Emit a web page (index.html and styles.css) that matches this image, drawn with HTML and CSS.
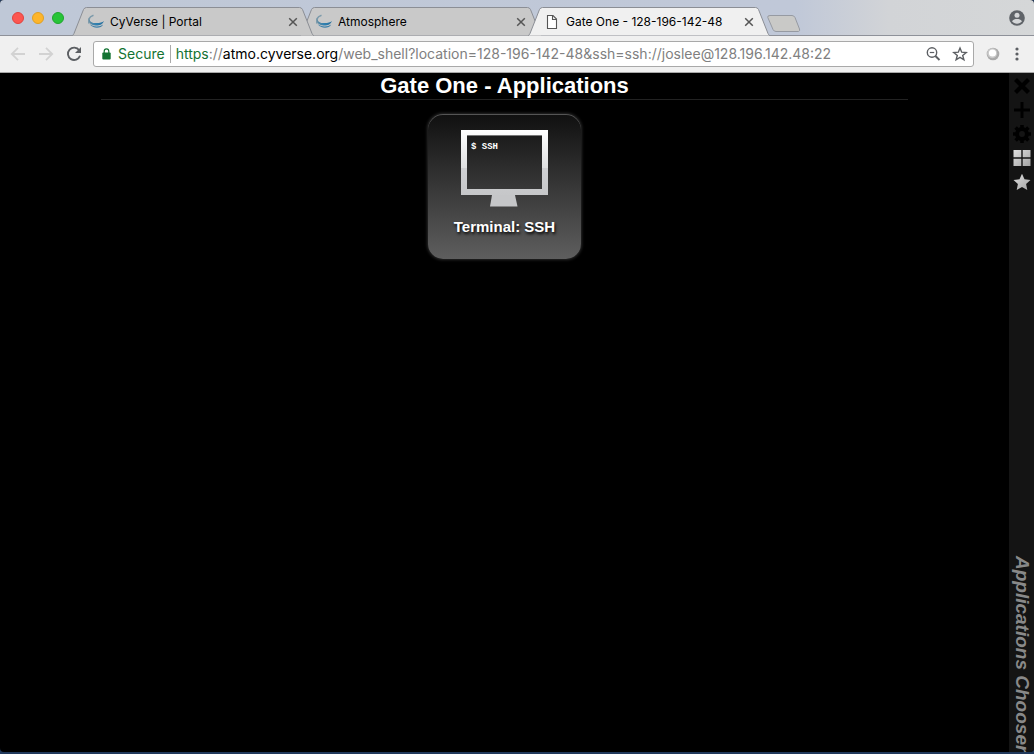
FILE: index.html
```html
<!DOCTYPE html>
<html lang="en">
<head>
<meta charset="utf-8">
<title>Gate One - 128-196-142-48</title>
<link rel="stylesheet" href="styles.css">
</head>
<body>
<svg class="defs" aria-hidden="true">
  <defs>
    <linearGradient id="swoosh-ink" x1="0" x2="1" y1="0" y2="0">
      <stop offset="0" stop-color="#5f8aa2"/><stop offset=".5" stop-color="#2f80b0"/><stop offset="1" stop-color="#2a6f9c"/>
    </linearGradient>
    <linearGradient id="silver" x1="0" x2="1" y1="0" y2="1">
      <stop offset="0" stop-color="#e0e0e0"/><stop offset="1" stop-color="#a2a2a2"/>
    </linearGradient>
    <symbol id="tab-shape" viewBox="0 0 242 29" preserveAspectRatio="none">
      <path d="M0 28.500C1 28.500 1.500 27.500 2 26.500L11.500 2.500Q12.500.5 14.500.5H227.500Q229.500.5 230.500 2.500L240 26.500C240.500 27.500 241 28.500 242 28.500"/>
    </symbol>
    <symbol id="swoosh" viewBox="0 0 16 16">
      <path d="M5.500 1.300C.8 3-.6 6.500 1.400 9.500" fill="none" stroke="#7d9bab" stroke-width="1.600"/>
      <path d="M1.600 4C1.200 7.500 4 9 7.800 9.100S14 8.600 15.900 7C15 10.200 11.500 11.700 7.500 11.500C2.500 11.200-.3 8.200 1.600 4Z" fill="url(#swoosh-ink)"/>
      <path d="M1.600 10C5 13 11.500 13.200 15.200 10.500C13 14.800 5 15 1.600 10Z" fill="#3d7fa8"/>
    </symbol>
    <symbol id="cross" viewBox="0 0 10 10"><path d="M1.200 1.200l7.600 7.600M8.800 1.200l-7.600 7.600" stroke="#555" stroke-width="1.500"/></symbol>
  </defs>
</svg>
<div class="window">
  <header class="tab-strip">
    <div class="lights">
      <button class="light red" aria-label="Close window"></button>
      <button class="light amber" aria-label="Minimize window"></button>
      <button class="light green" aria-label="Zoom window"></button>
    </div>
    <nav class="tabs" aria-label="Tabs">
      <div class="tab first">
        <svg class="tab-bg" aria-hidden="true"><use href="#tab-shape"/></svg>
        <svg class="favicon" aria-hidden="true"><use href="#swoosh"/></svg>
        <a class="tab-title" href="#">CyVerse | Portal</a>
        <button class="tab-close" aria-label="Close tab"><svg><use href="#cross"/></svg></button>
      </div>
      <div class="tab second">
        <svg class="tab-bg" aria-hidden="true"><use href="#tab-shape"/></svg>
        <svg class="favicon" aria-hidden="true"><use href="#swoosh"/></svg>
        <a class="tab-title" href="#">Atmosphere</a>
        <button class="tab-close" aria-label="Close tab"><svg><use href="#cross"/></svg></button>
      </div>
      <div class="tab active">
        <svg class="tab-bg" aria-hidden="true"><use href="#tab-shape"/></svg>
        <svg class="favicon" viewBox="0 0 16 16" aria-hidden="true"><path d="M3.500 1.500H9L12.500 5V14.500H3.500ZM8.500 1.500V5.500H12.500" fill="#fff" stroke="#555" stroke-width="1.100"/></svg>
        <a class="tab-title" href="#" aria-current="page">Gate One - 128-196-142-48</a>
        <button class="tab-close" aria-label="Close tab"><svg><use href="#cross"/></svg></button>
      </div>
    </nav>
    <button class="new-tab" aria-label="New tab"><svg viewBox="0 0 34 17"><path d="M3 .5H25Q27 .5 28 2.500L32.500 14Q33.200 16 31.500 16.500H9Q7 16.500 6 14.500L.8 2.500Q.2 .5 3 .5Z" fill="#c9c9c7" stroke="#969aa2"/></svg></button>
    <button class="profile" aria-label="Profile"><svg viewBox="0 0 16 16"><circle cx="8" cy="8" r="7.800" fill="#5f6368"/><circle cx="8" cy="5.300" r="2.500" fill="#d4d6d8"/><path d="M3 11.300C4 9.300 6 8.900 8 8.900S12 9.300 13 11.300C10.800 14.500 5.200 14.500 3 11.300Z" fill="#d4d6d8"/></svg></button>
  </header>

  <div class="toolbar">
    <button class="tool" aria-label="Back"><svg viewBox="0 0 16 16"><path d="M15 8H2M8 1.800L1.800 8L8 14.200" fill="none" stroke="#d2d2d2" stroke-width="1.800"/></svg></button>
    <button class="tool" aria-label="Forward"><svg viewBox="0 0 16 16"><path d="M1 8H14M8 1.800L14.200 8L8 14.200" fill="none" stroke="#d2d2d2" stroke-width="1.800"/></svg></button>
    <button class="tool" aria-label="Reload"><svg viewBox="0 0 16 16"><path d="M13.200 4.200A6.200 6.200 0 1 0 14 9.800" fill="none" stroke="#5c5f63" stroke-width="1.900"/><path d="M15 1V7H9Z" fill="#5c5f63"/></svg></button>
    <div class="omnibox">
      <svg class="lock" viewBox="0 0 9 12" aria-hidden="true"><rect x=".3" y="4.500" width="8.400" height="7" rx="1" fill="#137333"/><path d="M2.200 5V3.200A2.300 2.300 0 0 1 6.800 3.200V5" fill="none" stroke="#137333" stroke-width="1.200"/></svg>
      <span class="secure">Secure</span>
      <div class="url" role="textbox" contenteditable="true" spellcheck="false" aria-label="Address"><span class="scheme">https</span>://<span class="host">atmo.cyverse.org</span>/web_shell?location=128-196-142-48&amp;ssh=ssh://joslee@128.196.142.48:22</div>
      <button class="omni-btn" aria-label="Zoom out"><svg viewBox="0 0 16 16"><circle cx="7" cy="6.500" r="4.700" fill="none" stroke="#5c5f63" stroke-width="1.400"/><path d="M4.800 6.500H9.200" stroke="#5c5f63" stroke-width="1.200"/><path d="M10.400 10L14.500 14" stroke="#5c5f63" stroke-width="1.900"/></svg></button>
      <button class="omni-btn" aria-label="Bookmark"><svg viewBox="0 0 16 16"><path d="M8 2L9.700 6.200L14.200 6.500L10.700 9.400L11.900 13.800L8 11.400L4.100 13.800L5.300 9.400L1.800 6.500L6.300 6.200Z" fill="none" stroke="#5c5f63" stroke-width="1.400"/></svg></button>
    </div>
    <button class="ext" aria-label="Extension"><svg viewBox="0 0 14 14"><circle cx="7" cy="7" r="6.300" fill="#a9a9a9"/><circle cx="6.200" cy="6.200" r="5" fill="#c9c9c9"/><circle cx="6.500" cy="6" r="3.600" fill="#fff"/></svg></button>
    <button class="menu" aria-label="Menu"><svg viewBox="0 0 4 14"><circle cx="2" cy="2" r="1.600"/><circle cx="2" cy="7" r="1.600"/><circle cx="2" cy="12" r="1.600"/></svg></button>
  </div>

  <div class="page">
    <main class="content">
      <h1 class="title">Gate One - Applications</h1>
      <button class="app">
        <svg class="monitor" viewBox="0 0 87 77" aria-hidden="true">
          <defs><linearGradient id="frame" x1="0" x2="0" y1="0" y2="1"><stop offset="0" stop-color="#fff"/><stop offset=".58" stop-color="#dfe0e1"/><stop offset=".59" stop-color="#cfd0d2"/><stop offset="1" stop-color="#c6c7c9"/></linearGradient></defs>
          <path d="M0 0H87V65H0ZM6 5V59H81V5Z" fill="url(#frame)" fill-rule="evenodd"/>
          <path d="M6 5.500H81" stroke="#777"/>
          <path d="M31 65H54L56.500 76.500H29Z" fill="#c5c6c8"/>
          <text class="prompt" x="10" y="19">$ SSH</text>
        </svg>
        <span class="app-name">Terminal: SSH</span>
      </button>
    </main>
    <aside class="sidebar">
      <button class="side-btn" aria-label="Close"><svg viewBox="0 0 18 18"><path d="M2.500 2.500L15.500 15.500M15.500 2.500L2.500 15.500" stroke="#000" stroke-width="4.200"/></svg></button>
      <button class="side-btn" aria-label="New"><svg viewBox="0 0 18 18"><path d="M9 1V17M1 9H17" stroke="#000" stroke-width="3"/></svg></button>
      <button class="side-btn" aria-label="Settings"><svg viewBox="0 0 18 18"><circle cx="9" cy="9" r="4.900" fill="none" stroke="#000" stroke-width="4"/><path d="M9 0V3M9 15V18M0 9H3M15 9H18M2.600 2.600L4.800 4.800M13.200 13.200L15.400 15.400M15.400 2.600L13.200 4.800M4.800 13.200L2.600 15.400" stroke="#000" stroke-width="3.600"/></svg></button>
      <button class="side-btn" aria-label="Grid"><svg viewBox="0 0 18 18"><path d="M.5 1H8.300V8.300H.5ZM9.700 1H17.500V8.300H9.700ZM.5 9.700H8.300V17H.5ZM9.700 9.700H17.500V17H9.700Z" fill="url(#silver)"/></svg></button>
      <button class="side-btn" aria-label="Applications"><svg viewBox="0 0 18 18"><path d="M9 .8L11.500 6.300L17.500 7L13.100 11.100L14.300 17L9 14L3.700 17L4.900 11.100L.5 7L6.500 6.300Z" fill="url(#silver)"/></svg></button>
      <div class="side-label">Applications Chooser</div>
    </aside>
  </div>
</div>
</body>
</html>
```

FILE: styles.css
```css
* { box-sizing: border-box; }
html, body { height: 100%; }
body {
  margin: 0;
  background: #21395c;
  font-family: Inter, "Noto Sans", sans-serif;
}
button {
  padding: 0;
  border: 0;
  background: none;
  font: inherit;
  color: inherit;
}
svg { display: block; }
.defs { position: absolute; width: 0; height: 0; }

.window {
  display: flex;
  flex-direction: column;
  height: calc(100vh - 2px);
  overflow: hidden;
  border-radius: 4px;
  background: #000;
}

/* Tab strip */
.tab-strip {
  display: flex;
  align-items: flex-end;
  flex: none;
  height: 36px;
  padding: 0 9px 0 12px;
  background: linear-gradient(90deg, #bfc8d7 0, #c0c8d8 77%, #d2d4d7 86%, #d5d7d8 100%);
  box-shadow: inset 0 -1px #8e9199;
}
.lights {
  display: flex;
  gap: 8px;
  width: 60px;
  height: 24px;
}
.light {
  width: 12px;
  height: 12px;
  border-radius: 50%;
}
.red { background: #fc5650; border: 1px solid #e0433e; }
.amber { background: #fdb52a; border: 1px solid #dfa023; }
.green { background: #27c438; border: 1px solid #1fa52d; }
.tabs { display: flex; flex: 0 1 698px; min-width: 0; }
.tab {
  position: relative;
  display: flex;
  align-items: center;
  flex: 0 1 242px;
  min-width: 0;
  height: 29px;
  padding: 0 16px;
}
.tab + .tab { margin-left: -14px; }
.first { z-index: 2; }
.second { z-index: 1; }
.active { z-index: 3; }
.tab-bg {
  position: absolute;
  inset: 0;
  width: 100%;
  height: 100%;
  fill: #c9c9c9;
  stroke: #8b8e95;
}
.active .tab-bg { fill: #f0f0f0; }
.favicon { position: relative; flex: none; width: 16px; height: 16px; }
.tab-title {
  position: relative;
  flex: 1;
  margin-left: 6px;
  overflow: hidden;
  white-space: nowrap;
  font-size: 12px;
  line-height: 16px;
  color: #000;
  text-decoration: none;
}
.tab-close { position: relative; flex: none; }
.tab-close svg { width: 10px; height: 10px; }
.new-tab { flex: none; margin: 0 auto 4px -3px; }
.new-tab svg { width: 34px; height: 17px; }
.profile { flex: none; margin-bottom: 10px; }
.profile svg { width: 16px; height: 16px; }

/* Toolbar */
.toolbar {
  display: flex;
  align-items: center;
  flex: none;
  height: 37px;
  padding: 0 15px 0 10px;
  border-bottom: 1px solid #a8a8a8;
  background: #f0f0f0;
}
.tool { flex: none; margin-right: 12px; }
.tool svg { width: 16px; height: 16px; }
.tool:nth-child(3) { margin-right: 11px; }
.omnibox {
  display: flex;
  align-items: center;
  flex: 1;
  min-width: 0;
  height: 26px;
  padding: 0 5px 0 8px;
  border: 1px solid #a9a9a9;
  border-radius: 3px;
  background: #fff;
  font-size: 14px;
  line-height: 18px;
}
.lock { flex: none; width: 9px; height: 12px; margin-right: 7px; }
.secure {
  margin-right: 5px;
  padding-right: 5px;
  border-right: 1px solid #aaa;
  color: #137333;
}
.url {
  flex: 1;
  min-width: 0;
  overflow: hidden;
  white-space: nowrap;
  color: #808080;
}
.scheme { color: #137333; }
.host { color: #000; }
.omni-btn { flex: none; margin-left: 11px; }
.omni-btn svg { width: 16px; height: 16px; }
.ext { flex: none; margin-left: 12px; }
.ext svg { width: 14px; height: 14px; }
.menu { flex: none; margin-left: 15px; }
.menu svg { width: 4px; height: 14px; fill: #5c5f63; }

/* Page */
.page { display: flex; flex: 1; min-height: 0; }
.content {
  display: flex;
  flex-direction: column;
  align-items: center;
  flex: 1;
  font-family: "Liberation Sans", Arial, sans-serif;
  color: #fff;
}
.title {
  width: 80%;
  margin: 0 0 14px;
  border-bottom: 1px solid #222;
  font-size: 22px;
  line-height: 26px;
  text-align: center;
}
.app {
  display: flex;
  flex-direction: column;
  align-items: center;
  width: 153px;
  height: 145px;
  padding-top: 16px;
  border-radius: 15px;
  background: linear-gradient(#101010, #5e5e5e);
  box-shadow: inset 0 1px #555, 0 0 3px 1px #2a2a2a;
}
.monitor { width: 87px; height: 77px; }
.prompt {
  fill: #fff;
  font-family: "Liberation Mono", monospace;
  font-size: 9px;
  font-weight: bold;
}
.app-name {
  margin-top: 11px;
  font-size: 15px;
  font-weight: bold;
  line-height: 18px;
  text-shadow: 1px 2px 3px #000;
}
.sidebar {
  display: flex;
  flex-direction: column;
  align-items: center;
  flex: none;
  width: 25px;
  padding-top: 4px;
  background: #141414;
}
.side-btn { flex: none; margin-bottom: 6px; }
.side-btn svg { width: 18px; height: 18px; }
.side-label {
  margin-top: auto;
  writing-mode: vertical-rl;
  font: italic bold 19px/24px "Liberation Sans", Arial, sans-serif;
  color: #898989;
  white-space: nowrap;
}
```
